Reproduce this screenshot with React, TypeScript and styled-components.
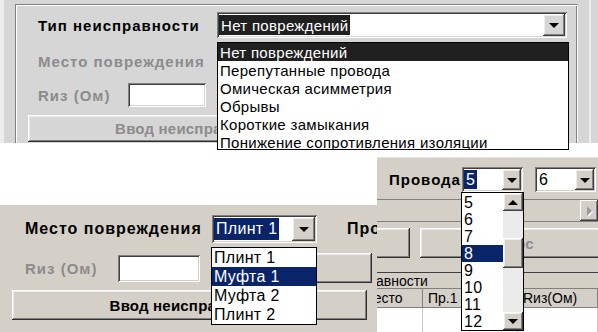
import React from "react";
import styled, { createGlobalStyle } from "styled-components";

const NAVY = "#0a246a";

const GlobalStyle = createGlobalStyle`
  html, body { margin: 0; padding: 0; background: #ffffff; }
  body { font-family: "Liberation Sans", Arial, sans-serif; color: #000; }
  #root { width: 598px; height: 332px; overflow: hidden; }
`;

const FAULT_TYPES = [
  "Нет повреждений",
  "Перепутанные провода",
  "Омическая асимметрия",
  "Обрывы",
  "Короткие замыкания",
  "Понижение сопротивления изоляции",
];

const PLACES = ["Плинт 1", "Муфта 1", "Муфта 2", "Плинт 2"];
const WIRES = ["5", "6", "7", "8", "9", "10", "11", "12"];

const Page = styled.div`
  width: 598px;
  height: 332px;
  display: flex;
  flex-direction: column;
  overflow: hidden;
  background: #fff;
`;

/* ---------- screenshots ---------- */

const TopShot = styled.div`
  --face: #d6d6d6;
  position: relative;
  box-sizing: border-box;
  flex: 0 0 143px;
  display: flex;
  padding: 4px 0 0 11px;
  border-left: 4px solid #ececec;
  background: linear-gradient(
    to right,
    #d6d6d6 585px,
    #efefef 585px,
    #efefef 587px,
    #d6d6d6 587px
  );
`;

const GroupBox = styled.div`
  flex: 0 0 563px;
  box-sizing: border-box;
  display: flex;
  flex-direction: column;
  border-top: 1px solid #808080;
  border-left: 1px solid #808080;
  border-right: 1px solid #ffffff;
  box-shadow: inset 1px 1px 0 #ffffff, inset -1px 0 0 #808080;
`;

const BottomRow = styled.div`
  display: flex;
  align-items: flex-start;
  margin-top: 14px;
`;

const LeftShot = styled.div`
  --face: #d4d0c8;
  position: relative;
  flex: 0 0 377px;
  height: 127px;
  margin-top: 48px;
  overflow: hidden;
  background: var(--face);
`;

const RightShot = styled.div`
  --face: #d4d0c8;
  position: relative;
  box-sizing: border-box;
  flex: 0 0 221px;
  height: 175px;
  overflow: hidden;
  display: flex;
  flex-direction: column;
  border-top: 1px solid #e4e4e4;
  background: var(--face);
`;

/* ---------- form parts ---------- */

const Row = styled.div<{ $h: number; $top: number; $indent?: number }>`
  display: flex;
  align-items: center;
  flex: 0 0 ${(p) => p.$h}px;
  height: ${(p) => p.$h}px;
  margin-top: ${(p) => p.$top}px;
  padding-left: ${(p) => p.$indent ?? 0}px;
`;

const Label = styled.span<{ $w?: number; $muted?: boolean; $ml?: number; $size?: number }>`
  flex: 0 0 auto;
  width: ${(p) => (p.$w ? `${p.$w}px` : "auto")};
  margin-left: ${(p) => p.$ml ?? 0}px;
  font-weight: 700;
  font-size: ${(p) => p.$size ?? 15}px;
  letter-spacing: 1px;
  white-space: nowrap;
  color: ${(p) => (p.$muted ? "#8c8c8c" : "#000")};
`;

const Combo = styled.div<{ $w: number; $h: number; $ml?: number }>`
  box-sizing: border-box;
  flex: 0 0 auto;
  width: ${(p) => p.$w}px;
  height: ${(p) => p.$h}px;
  margin-left: ${(p) => p.$ml ?? 0}px;
  padding: 2px;
  display: flex;
  background: #fff;
  box-shadow: inset 1px 1px 0 #808080, inset -1px -1px 0 #ffffff,
    inset 2px 2px 0 #404040, inset -2px -2px 0 var(--face);
`;

const ComboValue = styled.div<{ $size: number }>`
  flex: 1;
  min-width: 0;
  display: flex;
  align-items: stretch;
  padding: 1px 0;
  font-size: ${(p) => p.$size}px;
  letter-spacing: 0.3px;
  white-space: nowrap;
  overflow: hidden;
`;

const ValueText = styled.span<{ $hl?: string }>`
  display: flex;
  align-items: center;
  padding: 0 2px;
  background: ${(p) => p.$hl ?? "transparent"};
  color: ${(p) => (p.$hl ? "#fff" : "#000")};
`;

const DropButton = styled.div<{ $w: number }>`
  flex: 0 0 ${(p) => p.$w}px;
  display: flex;
  align-items: center;
  justify-content: center;
  background: var(--face);
  box-shadow: inset -1px -1px 0 #404040, inset 1px 1px 0 #ffffff,
    inset -2px -2px 0 #808080, inset 2px 2px 0 #ececec;
`;

const ArrowDown = styled.span`
  width: 0;
  height: 0;
  margin-top: 1px;
  border-left: 5px solid transparent;
  border-right: 5px solid transparent;
  border-top: 5px solid #000;
`;

const ArrowUp = styled.span`
  width: 0;
  height: 0;
  border-left: 5px solid transparent;
  border-right: 5px solid transparent;
  border-bottom: 5px solid #000;
`;

const ArrowRightMuted = styled.span`
  width: 0;
  height: 0;
  border-top: 5px solid transparent;
  border-bottom: 5px solid transparent;
  border-left: 5px solid #9a9a9a;
  filter: drop-shadow(1px 1px 0 #ffffff);
`;

const TextInput = styled.div<{ $w: number; $h: number }>`
  flex: 0 0 auto;
  width: ${(p) => p.$w}px;
  height: ${(p) => p.$h}px;
  background: #fff;
  box-shadow: inset 1px 1px 0 #808080, inset -1px -1px 0 #ffffff,
    inset 2px 2px 0 #404040, inset -2px -2px 0 var(--face);
`;

const Button = styled.div<{ $w: number; $h: number; $ml?: number; $muted?: boolean }>`
  box-sizing: border-box;
  flex: 0 0 auto;
  width: ${(p) => p.$w}px;
  height: ${(p) => p.$h}px;
  margin-left: ${(p) => p.$ml ?? 0}px;
  display: flex;
  align-items: center;
  justify-content: center;
  background: var(--face);
  box-shadow: inset -1px -1px 0 #303030, inset 1px 1px 0 #ffffff,
    inset -2px -2px 0 #808080, inset 2px 2px 0 #ececec;
  font-weight: 700;
  font-size: 15px;
  letter-spacing: 0.2px;
  white-space: nowrap;
  overflow: hidden;
  color: ${(p) => (p.$muted ? "#8c8c8c" : "#000")};
`;

/* ---------- drop-down lists ---------- */

const DropList = styled.div<{ $x: number; $y: number; $w: number; $h: number }>`
  position: absolute;
  z-index: 2;
  left: ${(p) => p.$x}px;
  top: ${(p) => p.$y}px;
  width: ${(p) => p.$w}px;
  height: ${(p) => p.$h}px;
  box-sizing: border-box;
  display: flex;
  border: 1px solid #000;
  background: #fff;
  overflow: hidden;
`;

const Items = styled.div<{ $pt?: number }>`
  flex: 1;
  min-width: 0;
  display: flex;
  flex-direction: column;
  padding-top: ${(p) => p.$pt ?? 0}px;
`;

const Item = styled.div<{ $h: number; $size: number; $hl?: string }>`
  flex: 0 0 ${(p) => p.$h}px;
  height: ${(p) => p.$h}px;
  min-height: 0;
  line-height: 1;
  display: flex;
  align-items: center;
  padding-left: 2px;
  font-size: ${(p) => p.$size}px;
  letter-spacing: 0.3px;
  white-space: nowrap;
  overflow: hidden;
  background: ${(p) => p.$hl ?? "transparent"};
  color: ${(p) => (p.$hl ? "#fff" : "#000")};
`;

const VScroll = styled.div`
  flex: 0 0 20px;
  display: flex;
  flex-direction: column;
  background: #ebebeb;
`;

const ScrollButton = styled.div<{ $h: number; $top?: number }>`
  flex: 0 0 ${(p) => p.$h}px;
  margin-top: ${(p) => p.$top ?? 0}px;
  display: flex;
  align-items: center;
  justify-content: center;
  background: var(--face);
  box-shadow: inset -1px -1px 0 #404040, inset 1px 1px 0 #ffffff,
    inset -2px -2px 0 #808080, inset 2px 2px 0 #ececec;
`;

const Spacer = styled.div`
  flex: 1;
`;

/* ---------- right screenshot extras ---------- */

const Strip = styled.div`
  flex: 0 0 23px;
  box-sizing: border-box;
  margin-top: 7px;
  display: flex;
  border-top: 1px solid #808080;
  border-bottom: 1px solid #808080;
`;

const StripButton = styled.div`
  flex: 0 0 18px;
  display: flex;
  align-items: center;
  justify-content: center;
  background: var(--face);
  box-shadow: inset -1px -1px 0 #404040, inset 1px 1px 0 #ffffff,
    inset -2px -2px 0 #808080;
`;

const Table = styled.div`
  margin-top: 14px;
  margin-left: -90px;
  display: flex;
  flex-direction: column;
  font-size: 14px;
`;

const HeadBand = styled.div`
  height: 17px;
  box-sizing: border-box;
  display: flex;
  align-items: center;
  padding-left: 16px;
  border-top: 1px solid #404040;
  border-bottom: 1px solid #808080;
  white-space: nowrap;
`;

const GridRow = styled.div<{ $body?: boolean }>`
  display: grid;
  grid-template-columns: 136px 47px 48px 80px;
  height: ${(p) => (p.$body ? 24 : 18)}px;
  background: ${(p) => (p.$body ? "#ffffff" : "transparent")};
  border-bottom: 1px solid ${(p) => (p.$body ? "#c8c8c8" : "#808080")};
`;

const Cell = styled.div<{ $pad?: number; $line?: string }>`
  display: flex;
  align-items: center;
  padding-left: ${(p) => p.$pad ?? 0}px;
  border-right: 1px solid ${(p) => p.$line ?? "#808080"};
  white-space: nowrap;
  overflow: hidden;
`;

export default function App() {
  return (
    <Page>
      <GlobalStyle />

      <TopShot>
        <GroupBox>
          <Row $h={26} $top={7} $indent={22}>
            <Label $w={179}>Тип неисправности</Label>
            <Combo $w={350} $h={26}>
              <ComboValue $size={15}>
                <ValueText $hl="#202020">Нет повреждений</ValueText>
              </ComboValue>
              <DropButton $w={22}>
                <ArrowDown />
              </DropButton>
            </Combo>
          </Row>
          <Row $h={26} $top={10} $indent={22}>
            <Label $muted>Место повреждения</Label>
          </Row>
          <Row $h={24} $top={9} $indent={22}>
            <Label $w={90} $muted>
              Rиз (Ом)
            </Label>
            <TextInput $w={78} $h={24} />
          </Row>
          <Row $h={27} $top={8} $indent={12}>
            <Button $w={334} $h={27} $muted>
              Ввод неисправности
            </Button>
          </Row>
        </GroupBox>
        <DropList $x={213} $y={42} $w={352} $h={108}>
          <Items>
            {FAULT_TYPES.map((t, i) => (
              <Item key={t} $h={18} $size={15} $hl={i === 0 ? "#202020" : undefined}>
                {t}
              </Item>
            ))}
          </Items>
        </DropList>
      </TopShot>

      <BottomRow>
        <LeftShot>
          <Row $h={28} $top={10} $indent={25}>
            <Label $w={187} $size={16}>
              Место повреждения
            </Label>
            <Combo $w={105} $h={28}>
              <ComboValue $size={16}>
                <ValueText $hl={NAVY}>Плинт 1</ValueText>
              </ComboValue>
              <DropButton $w={23}>
                <ArrowDown />
              </DropButton>
            </Combo>
            <Label $ml={30} $size={16}>
              Провода
            </Label>
          </Row>
          <Row $h={30} $top={10} $indent={25}>
            <Label $w={93} $muted>
              Rиз (Ом)
            </Label>
            <TextInput $w={82} $h={27} />
            <Button $w={161} $h={30} $ml={11} />
          </Row>
          <Row $h={30} $top={7} $indent={12}>
            <Button $w={355} $h={30}>
              Ввод неисправности
            </Button>
          </Row>
          <DropList $x={211} $y={42} $w={106} $h={78}>
            <Items>
              {PLACES.map((p, i) => (
                <Item key={p} $h={19} $size={16} $hl={i === 1 ? NAVY : undefined}>
                  {p}
                </Item>
              ))}
            </Items>
          </DropList>
        </LeftShot>

        <RightShot>
          <Row $h={25} $top={9} $indent={12}>
            <Label $w={73}>Провода</Label>
            <Combo $w={61} $h={25}>
              <ComboValue $size={16}>
                <ValueText $hl={NAVY}>5</ValueText>
              </ComboValue>
              <DropButton $w={19}>
                <ArrowDown />
              </DropButton>
            </Combo>
            <Combo $w={61} $h={25} $ml={12}>
              <ComboValue $size={16}>
                <ValueText>6</ValueText>
              </ComboValue>
              <DropButton $w={19}>
                <ArrowDown />
              </DropButton>
            </Combo>
          </Row>
          <Strip>
            <Spacer />
            <StripButton>
              <ArrowRightMuted />
            </StripButton>
          </Strip>
          <Row $h={30} $top={6}>
            <Button $w={43} $h={30} $ml={-10} />
            <Button $w={180} $h={30} $ml={10} $muted>
              Сброс
            </Button>
          </Row>
          <Table>
            <HeadBand>Тип неисправности</HeadBand>
            <GridRow>
              <Cell $pad={75}>Место</Cell>
              <Cell $pad={5}>Пр.1</Cell>
              <Cell $pad={5}>Пр.2</Cell>
              <Cell $pad={5}>Rиз(Ом)</Cell>
            </GridRow>
            <GridRow $body>
              <Cell $line="#c8c8c8" />
              <Cell $line="#c8c8c8" />
              <Cell $line="#c8c8c8" />
              <Cell $line="#c8c8c8" />
            </GridRow>
          </Table>
          <DropList $x={84} $y={34} $w={63} $h={139}>
            <Items $pt={1}>
              {WIRES.map((w) => (
                <Item key={w} $h={17} $size={16} $hl={w === "8" ? NAVY : undefined}>
                  {w}
                </Item>
              ))}
            </Items>
            <VScroll>
              <ScrollButton $h={18}>
                <ArrowUp />
              </ScrollButton>
              <ScrollButton $h={30} $top={27} />
              <Spacer />
              <ScrollButton $h={18}>
                <ArrowDown />
              </ScrollButton>
            </VScroll>
          </DropList>
        </RightShot>
      </BottomRow>
    </Page>
  );
}
